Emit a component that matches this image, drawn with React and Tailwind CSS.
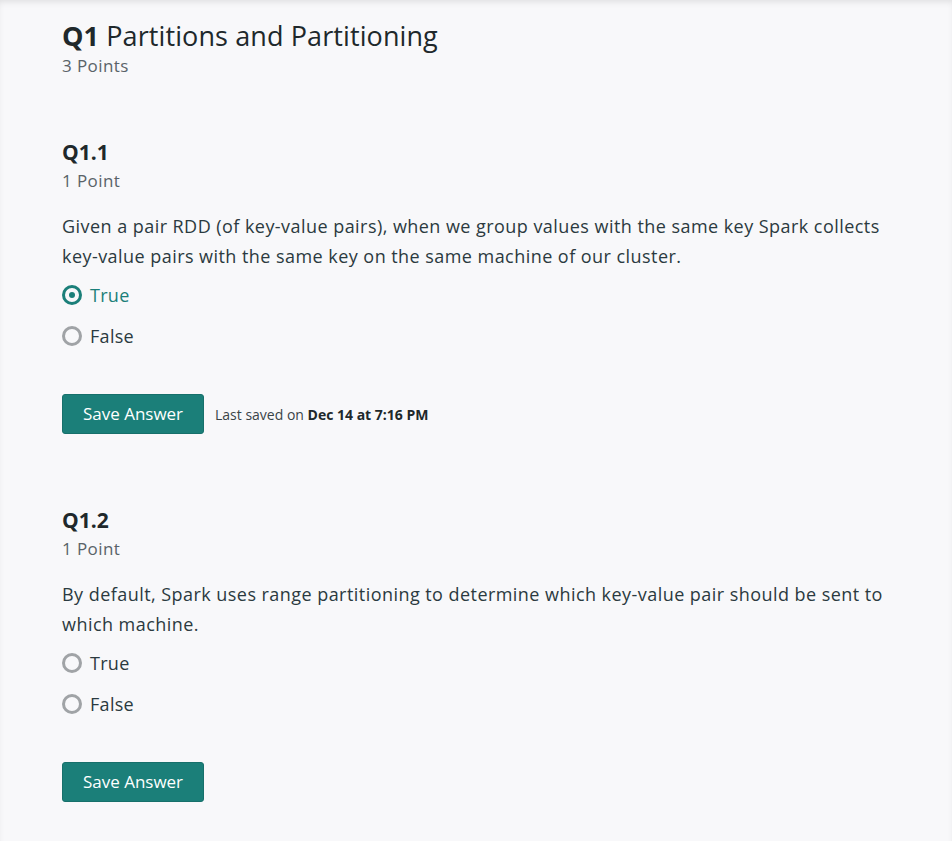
export default function App() {
  const font = { fontFamily: '"Open Sans", "Liberation Sans", sans-serif' };
  const Radio = ({ checked, label }) => (
    <label className="flex items-center gap-[8px] h-[24px]">
      <span
        className={
          "w-[20px] h-[20px] rounded-full border-[3px] flex items-center justify-center " +
          (checked ? "border-[#1b7f79]" : "border-[#a0a3a6]")
        }
      >
        {checked && <span className="w-[6px] h-[6px] rounded-full bg-[#1b7f79]" />}
      </span>
      <span className={"text-[18px] tracking-[0.3px] " + (checked ? "text-[#1b7f79]" : "text-[#2b3a40]")}>{label}</span>
    </label>
  );
  const Question = ({ num, text, checked, saved }) => (
    <div className="flex flex-col">
      <div className="text-[21px] font-bold text-[#20282b] leading-[30px]">{num}</div>
      <div className="mt-[2px] text-[17px] tracking-[0.4px] text-[#5a6368] leading-[24px]">1 Point</div>
      <p className="mt-[18px] text-[18px] tracking-[0.45px] leading-[30px] text-[#2b3a40]">{text}</p>
      <div className="mt-[12px] flex flex-col gap-[17px]">
        <Radio checked={checked === "True"} label="True" />
        <Radio checked={checked === "False"} label="False" />
      </div>
      <div className="mt-[46px] flex items-center gap-[11px]">
        <button className="w-[142px] h-[40px] rounded-[3px] bg-[#1b7f79] border border-[#17706b] text-white text-[17px]">
          Save Answer
        </button>
        {saved && (
          <span className="text-[14px] text-[#3a4448]">
            Last saved on <b className="font-bold text-[#20282b]">{saved}</b>
          </span>
        )}
      </div>
    </div>
  );
  return (
    <div style={font} className="min-h-[841px] bg-[#f8f8fa] shadow-[inset_0_4px_6px_-2px_rgba(0,0,0,0.1)] px-[62px] pt-[18px]">
      <div className="text-[27px] tracking-[0.1px] leading-[36px] text-[#20282b]">
        <span className="font-bold">Q1</span> Partitions and Partitioning
      </div>
      <div className="text-[17px] tracking-[0.4px] text-[#5a6368] leading-[24px]">3 Points</div>
      <div className="mt-[59px] flex flex-col gap-[71px]">
        <Question
          num="Q1.1"
          text="Given a pair RDD (of key-value pairs), when we group values with the same key Spark collects key-value pairs with the same key on the same machine of our cluster."
          checked="True"
          saved="Dec 14 at 7:16 PM"
        />
        <Question
          num="Q1.2"
          text="By default, Spark uses range partitioning to determine which key-value pair should be sent to which machine."
        />
      </div>
    </div>
  );
}
